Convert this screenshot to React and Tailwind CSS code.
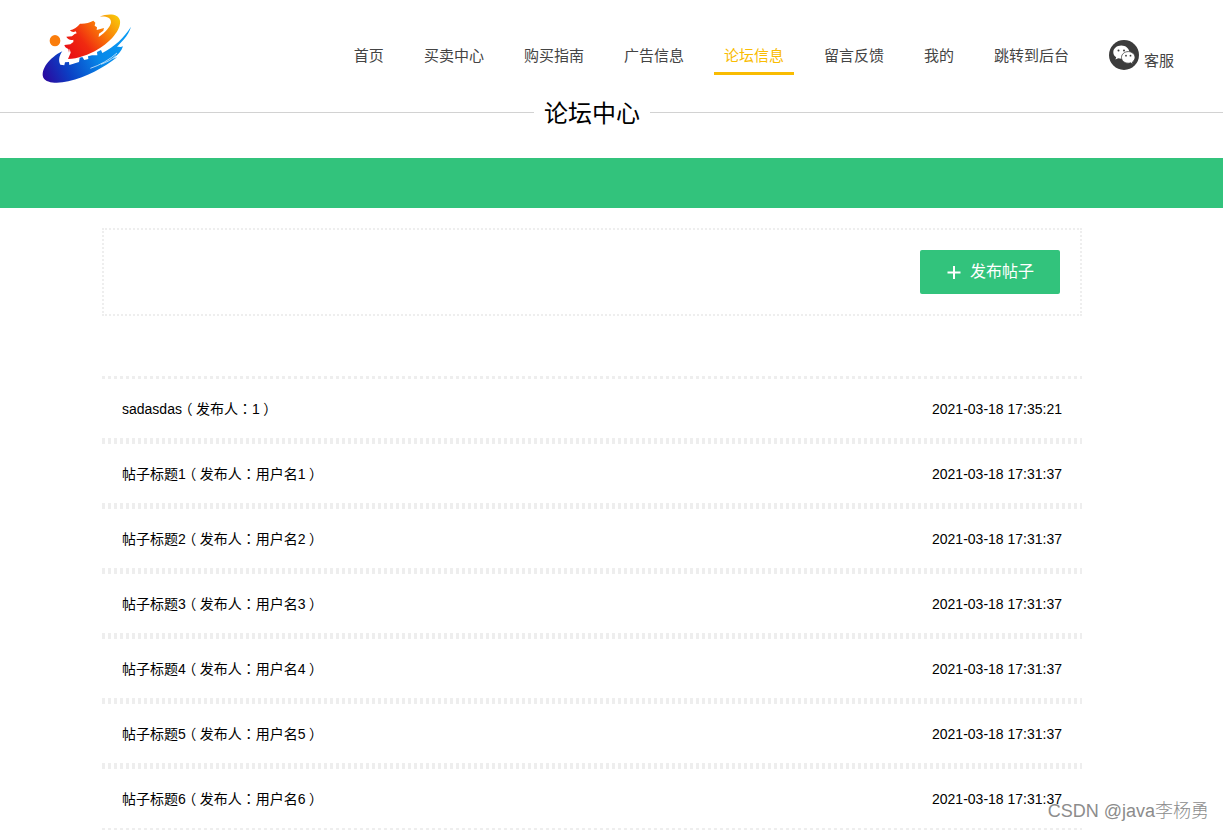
const navItems = [
  { label: '首页' },
  { label: '买卖中心' },
  { label: '购买指南' },
  { label: '广告信息' },
  { label: '论坛信息', active: true },
  { label: '留言反馈' },
  { label: '我的' },
  { label: '跳转到后台' },
];

const posts = [
  { title: 'sadasdas', author: '1', time: '2021-03-18 17:35:21' },
  { title: '帖子标题1', author: '用户名1', time: '2021-03-18 17:31:37' },
  { title: '帖子标题2', author: '用户名2', time: '2021-03-18 17:31:37' },
  { title: '帖子标题3', author: '用户名3', time: '2021-03-18 17:31:37' },
  { title: '帖子标题4', author: '用户名4', time: '2021-03-18 17:31:37' },
  { title: '帖子标题5', author: '用户名5', time: '2021-03-18 17:31:37' },
  { title: '帖子标题6', author: '用户名6', time: '2021-03-18 17:31:37' },
];

function Logo() {
  return (
    <svg width="115" height="85" viewBox="0 0 345 255" aria-label="logo">
      <defs>
        <linearGradient id="sun" x1="120" y1="150" x2="265" y2="35" gradientUnits="userSpaceOnUse">
          <stop offset="0" stopColor="#e90f14" />
          <stop offset="0.3" stopColor="#f02a10" />
          <stop offset="0.65" stopColor="#f97a08" />
          <stop offset="1" stopColor="#f8c90a" />
        </linearGradient>
        <linearGradient id="wave" x1="40" y1="210" x2="300" y2="90" gradientUnits="userSpaceOnUse">
          <stop offset="0" stopColor="#2a0ba0" />
          <stop offset="0.25" stopColor="#0b3fc4" />
          <stop offset="0.6" stopColor="#0787e8" />
          <stop offset="1" stopColor="#0a9cf5" />
        </linearGradient>
      </defs>
      <ellipse cx="75" cy="107" rx="16" ry="17" fill="#fa7d0c" />
      <path
        fill="url(#sun)"
        d="M208 35 C236 24 266 26 270 47 C274 74 240 112 205 132 C176 150 143 161 114 162 L122 143 L119 131 L117 143 L115 132 C109 129 104 126 103 120 L121 118 L130 111 L130 104 C120 107 112 101 109 95 L126 94 L134 87 L140 85 L137 79 C131 82 124 81 120 76 C131 74 143 66 150 56 C164 57 178 54 190 47 L196 53 L194 62 L201 67 L200 75 L222 69 L220 77 L207 86 L206 96 C226 84 242 64 243 52 C243 36 226 33 208 35 Z"
      />
      <path
        fill="url(#wave)"
        d="M97 139 C88 151 84 167 91 179 L103 181 L105 172 L117 171 L118 180 L147 171 L149 158 L157 156 L163 165 L175 162 L174 154 L186 151 L202 151 L201 141 L213 135 L217 144 C254 125 282 98 303 65 C299 79 291 92 282 103 L261 125 C266 125 273 127 279 124 C275 138 263 151 248 162 L262 156 C224 187 169 216 115 229 C84 236 49 235 40 218 C31 194 58 158 97 139 Z"
      />
      <path fill="none" stroke="#fff" strokeWidth="2" d="M181 190 C211 180 240 163 261 144 M213 178 C231 171 245 164 258 152" />
    </svg>
  );
}

function WechatIcon() {
  return (
    <svg width="30" height="30" viewBox="0 0 30 30" aria-hidden="true">
      <circle cx="15" cy="15" r="15" fill="#3c3c3c" />
      <path fill="#fff" d="M12.3 5.6c-4.500 0-8 2.900-8 6.600 0 2.100 1.100 3.900 2.900 5.100l-.8 2.300 2.800-1.400c1 .3 2 .5 3.100.5 4.400 0 8-2.900 8-6.500 0-3.700-3.600-6.600-8-6.600z" />
      <path fill="#fff" stroke="#3c3c3c" strokeWidth="0.800" d="M19.300 11.600c-3.800 0-6.800 2.600-6.800 5.800s3 5.800 6.800 5.800c.8 0 1.600-.1 2.300-.4l2.500 1.400-.7-2.200c1.600-1.100 2.600-2.700 2.600-4.600 0-3.200-3-5.800-6.700-5.800z" />
      <g fill="#3c3c3c">
        <circle cx="9.500" cy="10.500" r="1" />
        <circle cx="15" cy="10.500" r="1" />
        <circle cx="17" cy="15.700" r="0.900" />
        <circle cx="21.500" cy="15.700" r="0.900" />
      </g>
    </svg>
  );
}

// row of 3px square dots
function Dots() {
  return <div className="h-[3px] bg-[repeating-linear-gradient(90deg,#eee_0_3px,transparent_3px_6px)]" />;
}

// full-width bracket, centred in its cell
function Bracket({ children }) {
  return <span className="inline-block w-3.5 text-center [font-feature-settings:'halt']">{children}</span>;
}

export default function App() {
  return (
    <div className="relative h-screen overflow-hidden bg-white font-['Liberation_Sans','Noto_Sans_CJK_SC',sans-serif] text-black">
      <header className="flex items-start justify-between pl-[30px] pr-[39px] pt-[5px]">
        <a href="#home"><Logo /></a>
        <nav className="flex gap-5 pt-[30px] text-[15px] leading-[42px] text-[#444]">
          {navItems.map(item => (
            <a
              key={item.label}
              href="#nav"
              className={`h-10 border-b-[3px] px-[10px] whitespace-nowrap ${item.active ? 'border-[#f9bc02] text-[#f9bc02]' : 'border-transparent'}`}
            >
              {item.label}
            </a>
          ))}
          <a href="#service" className="flex h-10 gap-[5px] px-[10px] pt-[5px] whitespace-nowrap">
            <WechatIcon />
            <span>客服</span>
          </a>
        </nav>
      </header>

      <div className="flex h-[68px] items-start">
        <div className="mt-[22px] h-px flex-1 bg-[#d2d2d2]" />
        <h1 className="px-[10px] pt-1 text-2xl leading-[40px]">论坛中心</h1>
        <div className="mt-[22px] h-px flex-1 bg-[#d2d2d2]" />
        <div className="mt-[22px] h-px w-[39px] bg-[#d2d2d2]" />
      </div>

      <div className="h-[50px] bg-[#32c37c]" />

      <main className="pr-[39px] pt-5">
        <div className="mx-auto max-w-[980px]">
          <div className="flex justify-end border-2 border-dotted border-[#eee] p-5">
            <button type="button" className="flex h-11 w-[140px] items-center justify-center gap-2 rounded-xs bg-[#32c37c] text-base text-white">
              <svg width="16" height="16" viewBox="0 0 16 16" stroke="#fff" strokeWidth="2" aria-hidden="true">
                <path d="M1.500 8.500h13M8 2v13" />
              </svg>
              发布帖子
            </button>
          </div>

          <ul className="mt-[60px] text-sm">
            {posts.map(post => (
              <li key={post.title}>
                <Dots />
                <a href="#post" className="flex h-[59px] items-center justify-between px-5">
                  <span>
                    {post.title}<Bracket>（</Bracket>发布人<span className="font-['Noto_Sans_CJK_TC',sans-serif]">：</span>{post.author}<Bracket>）</Bracket>
                  </span>
                  <span>{post.time}</span>
                </a>
                <Dots />
              </li>
            ))}
          </ul>
        </div>
      </main>

      <div className="absolute right-[14px] bottom-[5px] text-lg leading-7 font-light whitespace-nowrap text-[#8c8c8c]">
        CSDN @java李杨勇
      </div>
    </div>
  );
}
